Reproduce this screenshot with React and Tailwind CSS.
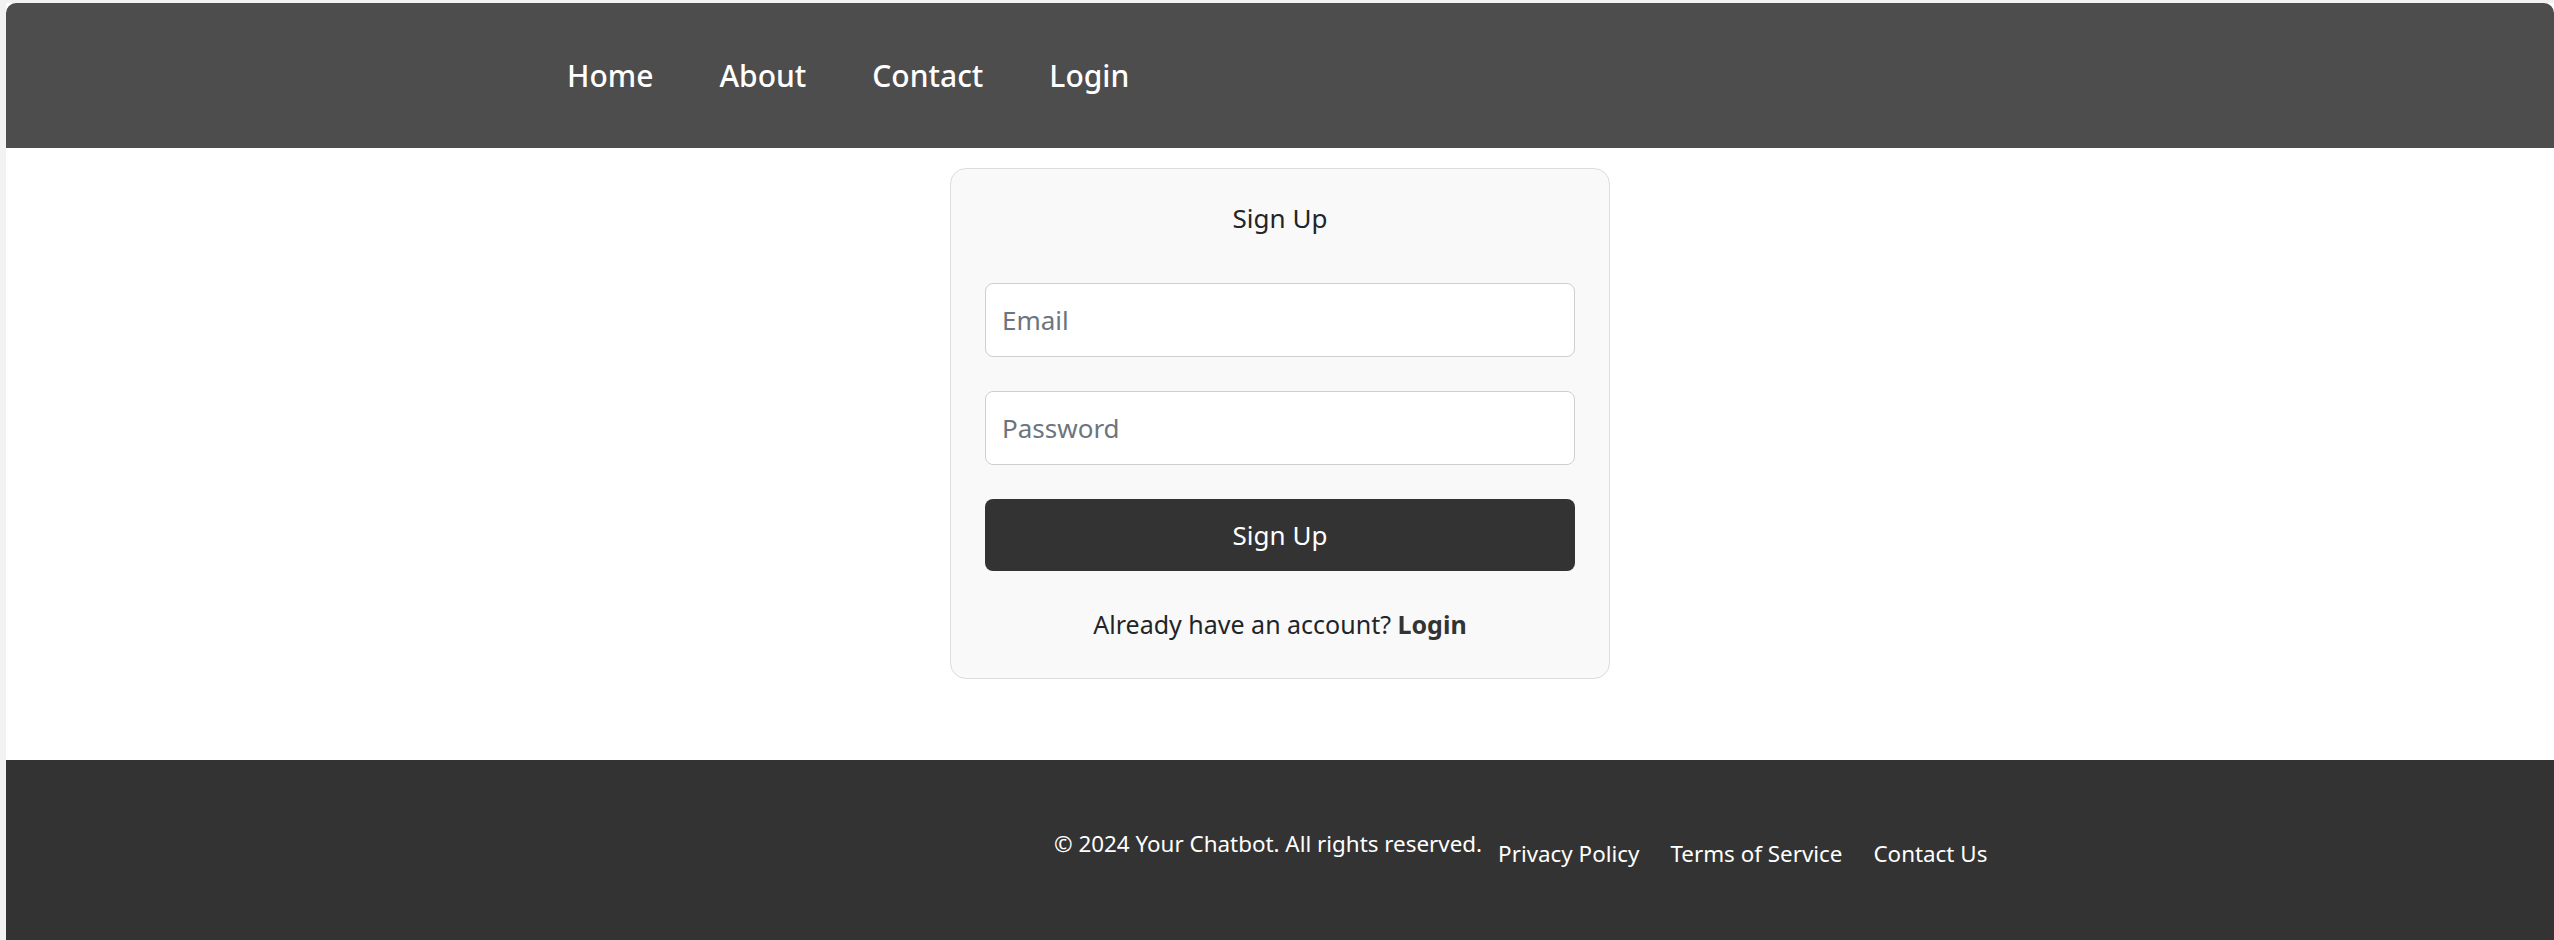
import React, { useState } from 'react';

const navLinks = ['Home', 'About', 'Contact', 'Login'];
const footerLinks = ['Privacy Policy', 'Terms of Service', 'Contact Us'];

const App = () => {
  const [email, setEmail] = useState('');
  const [password, setPassword] = useState('');

  return (
    <div className="min-h-screen bg-[#f2f2f2] pl-[6px] pt-[3px] font-['Noto_Sans',sans-serif]">
      <div className="flex min-h-[937px] flex-col bg-white">
        {/* top bar */}
        <header className="flex h-[145px] items-center gap-[66px] rounded-t-[10px] bg-[#4d4d4d] pl-[561px]">
          {navLinks.map((link) => (
            <a key={link} href="#" className="text-[30px] font-medium text-white">
              {link}
            </a>
          ))}
        </header>

        <main className="flex flex-1 justify-center pt-[20px] pb-[81px]">
          <div className="w-[660px] rounded-[16px] border border-[#dcdcdc] bg-[#f9f9f9] px-[34px] pt-[30px] pb-[34px]">
            <h2 className="text-center text-[26px] leading-[39px] text-[#212529]">Sign Up</h2>

            <form className="mt-[45px] flex flex-col gap-[34px]" onSubmit={(e) => e.preventDefault()}>
              <input
                type="email"
                value={email}
                onChange={(e) => setEmail(e.target.value)}
                placeholder="Email"
                className="h-[74px] w-full rounded-[8px] border border-[#cfcfcf] bg-white px-[16px] text-[26px] text-[#212529] placeholder:text-[#6c757d] outline-none"
              />
              <input
                type="password"
                value={password}
                onChange={(e) => setPassword(e.target.value)}
                placeholder="Password"
                className="h-[74px] w-full rounded-[8px] border border-[#cfcfcf] bg-white px-[16px] text-[26px] text-[#212529] placeholder:text-[#6c757d] outline-none"
              />
              <button type="submit" className="h-[72px] w-full rounded-[8px] bg-[#333333] text-[26px] text-white">
                Sign Up
              </button>
            </form>

            <p className="mt-[34px] text-center text-[25px] leading-[39px] text-[#212529]">
              Already have an account? <a href="#" className="font-bold text-[#333]">Login</a>
            </p>
          </div>
        </main>

        <footer className="h-[181px] bg-[#333333] pt-[67px]">
          <div className="ml-[1048px] flex items-start gap-[16px] text-[22.4px] leading-[33px] text-white">
            <p>© 2024 Your Chatbot. All rights reserved.</p>
            <div className="mt-[10px] flex gap-[31px]">
              {footerLinks.map((link) => (
                <a key={link} href="#" className="text-white">
                  {link}
                </a>
              ))}
            </div>
          </div>
        </footer>
      </div>
    </div>
  );
};

export default App;
